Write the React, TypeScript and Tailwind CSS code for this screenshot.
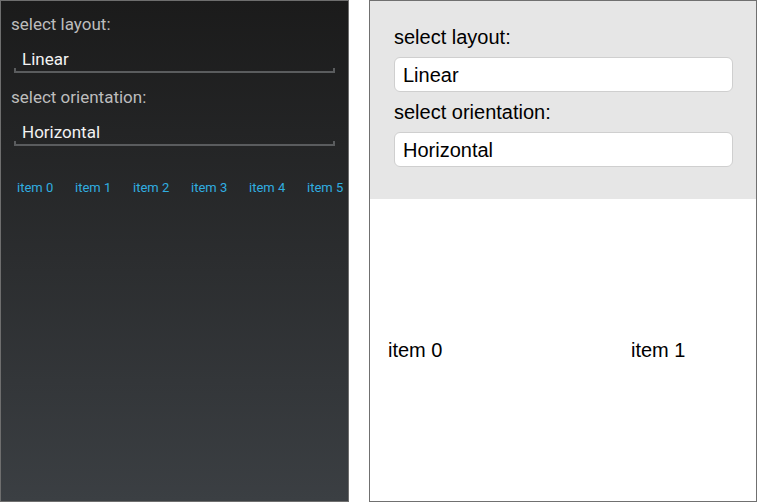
import React from "react";

const roboto = { fontFamily: "Roboto, 'Noto Sans', sans-serif" };
const helv = { fontFamily: "'Liberation Sans', Arial, sans-serif" };

function Spinner({ text }: { text: string }) {
  return (
    <div className="pt-[15px]">
      <div className="pl-[21px] text-[17px] leading-[20px] text-[#f2f2f2]">{text}</div>
      <div className="ml-[13px] w-[321px] h-[5px] border-x-2 border-b-2 border-[#5a5c5e] mt-[-1px]" />
    </div>
  );
}

export default function App() {
  const items = ["item 0", "item 1", "item 2", "item 3", "item 4", "item 5"];
  return (
    <div className="w-[757px] h-[502px] bg-white flex overflow-hidden">
      <div
        className="w-[349px] h-[502px] border border-[#6e6e6e] bg-gradient-to-b from-[#1b1b1b] to-[#3b3f43] overflow-hidden"
        style={roboto}
      >
        <div className="pt-[13px] pl-[10px] text-[17px] leading-[20px] text-[#bdbdbd]">select layout:</div>
        <Spinner text="Linear" />
        <div className="pt-[14px] pl-[10px] text-[17px] leading-[20px] text-[#bdbdbd]">select orientation:</div>
        <Spinner text="Horizontal" />
        <div className="flex pl-[16px] pt-[34px] text-[13px] leading-[16px] text-[#30aee0] whitespace-nowrap">
          {items.map((it) => (
            <div key={it} className="w-[58px] shrink-0">
              {it}
            </div>
          ))}
        </div>
      </div>
      <div className="w-[20px]" />
      <div className="w-[388px] h-[502px] border border-[#707070] flex flex-col" style={helv}>
        <div className="bg-[#e6e6e6] px-[24px] pt-[24px] pb-[32px] text-black">
          <div className="text-[20px] leading-[25px]">select layout:</div>
          <div className="mt-[7px] h-[35px] bg-white rounded-[6px] border border-[#cfcfcf] flex items-center pl-[8px] mr-[-1px] text-[20px] leading-[24px]">
            Linear
          </div>
          <div className="mt-[8px] text-[20px] leading-[25px]">select orientation:</div>
          <div className="mt-[7px] h-[35px] bg-white rounded-[6px] border border-[#cfcfcf] flex items-center pl-[8px] mr-[-1px] text-[20px] leading-[24px]">
            Horizontal
          </div>
        </div>
        <div className="flex-1 flex items-center pl-[18px] text-[20px] text-black">
          <div className="w-[243px]">item 0</div>
          <div>item 1</div>
        </div>
      </div>
    </div>
  );
}
